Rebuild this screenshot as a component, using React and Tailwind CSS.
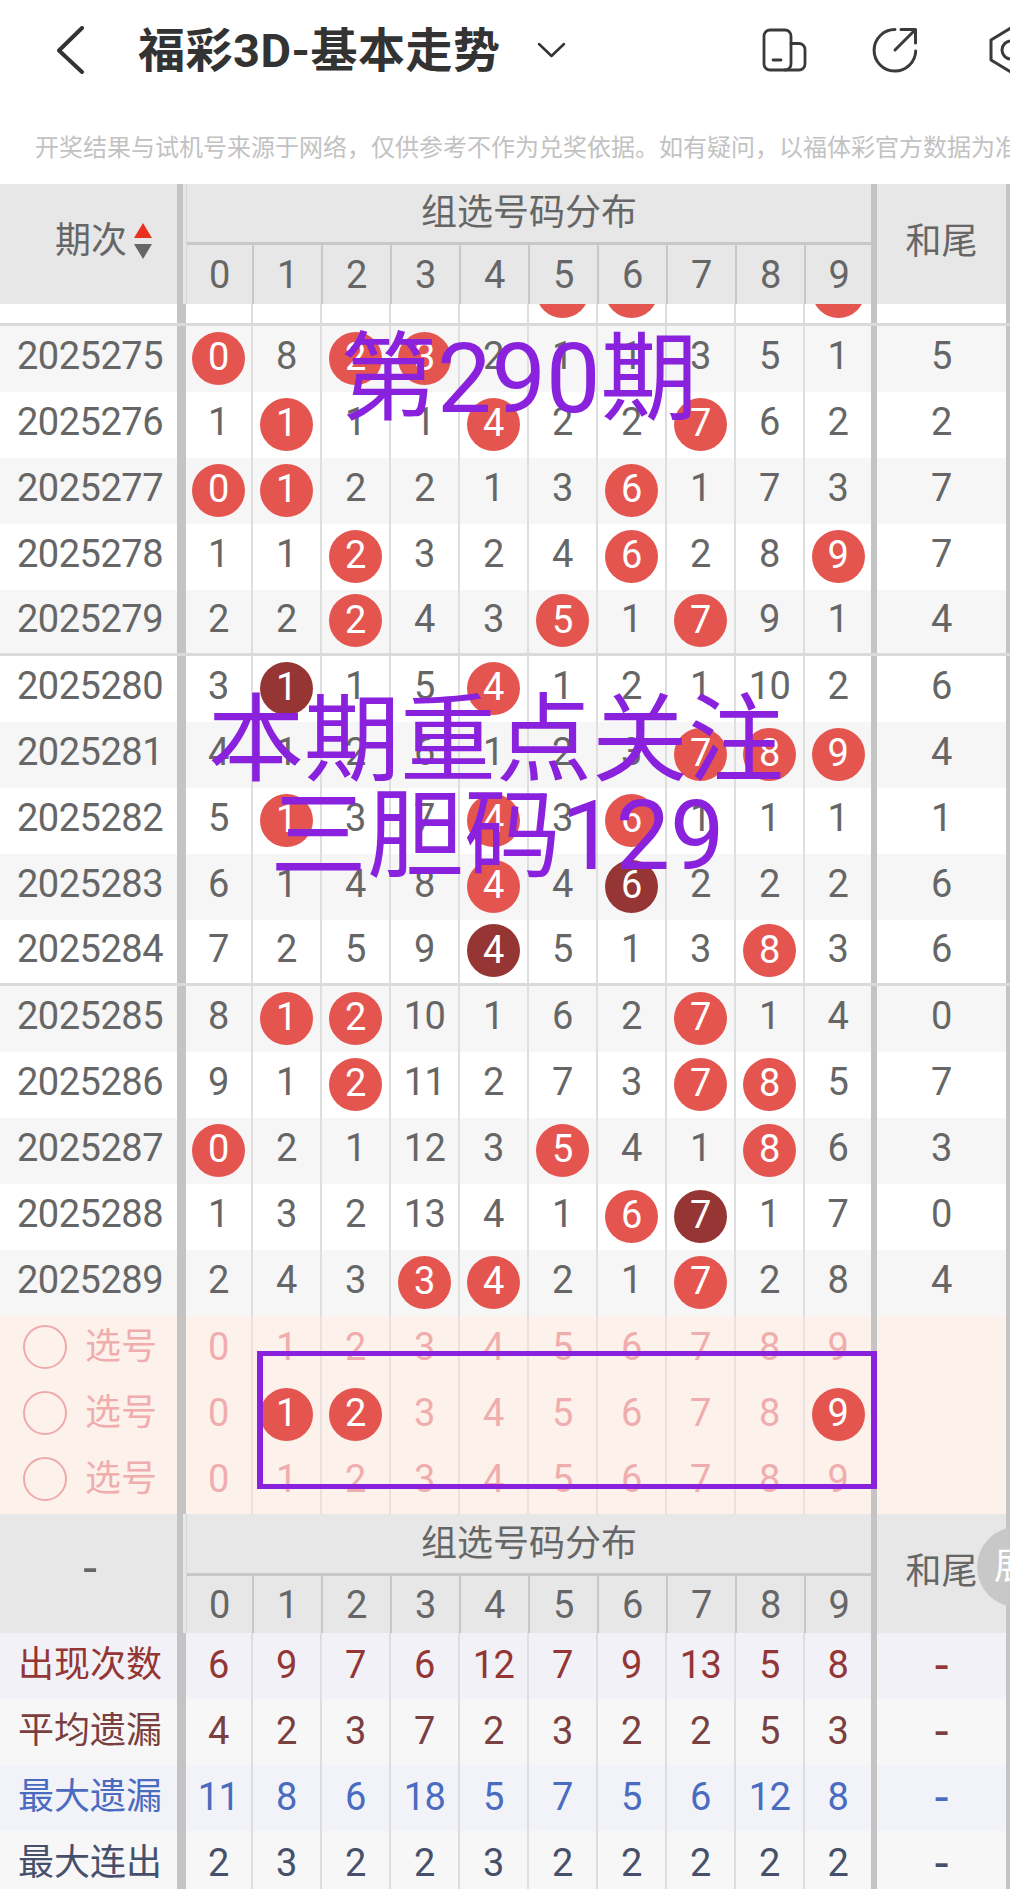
import React from 'react';

const rows = [
  ['2025275', ['0r', '8', '2r', '3r', '2', '1', '1', '3', '5', '1'], '5'],
  ['2025276', ['1', '1r', '1', '1', '4r', '2', '2', '7r', '6', '2'], '2'],
  ['2025277', ['0r', '1r', '2', '2', '1', '3', '6r', '1', '7', '3'], '7'],
  ['2025278', ['1', '1', '2r', '3', '2', '4', '6r', '2', '8', '9r'], '7'],
  ['2025279', ['2', '2', '2r', '4', '3', '5r', '1', '7r', '9', '1'], '4'],
  ['2025280', ['3', '1d', '1', '5', '4r', '1', '2', '1', '10', '2'], '6'],
  ['2025281', ['4', '1', '2', '6', '1', '2', '3', '7r', '8r', '9r'], '4'],
  ['2025282', ['5', '1r', '3', '7', '4r', '3', '6r', '1', '1', '1'], '1'],
  ['2025283', ['6', '1', '4', '8', '4r', '4', '6d', '2', '2', '2'], '6'],
  ['2025284', ['7', '2', '5', '9', '4d', '5', '1', '3', '8r', '3'], '6'],
  ['2025285', ['8', '1r', '2r', '10', '1', '6', '2', '7r', '1', '4'], '0'],
  ['2025286', ['9', '1', '2r', '11', '2', '7', '3', '7r', '8r', '5'], '7'],
  ['2025287', ['0r', '2', '1', '12', '3', '5r', '4', '1', '8r', '6'], '3'],
  ['2025288', ['1', '3', '2', '13', '4', '1', '6r', '7d', '1', '7'], '0'],
  ['2025289', ['2', '4', '3', '3r', '4r', '2', '1', '7r', '2', '8'], '4'],
];

const stats = [
  { label: '出现次数', values: [6, 9, 7, 6, 12, 7, 9, 13, 5, 8], bg: 'bg-[#f2f1f7]', color: 'text-[#933635]' },
  { label: '平均遗漏', values: [4, 2, 3, 7, 2, 3, 2, 2, 5, 3], bg: 'bg-[#f7f7f7]', color: 'text-[#7a4040]' },
  { label: '最大遗漏', values: [11, 8, 6, 18, 5, 7, 5, 6, 12, 8], bg: 'bg-[#f2f2f9]', color: 'text-[#4a6cc0]' },
  { label: '最大连出', values: [2, 3, 2, 2, 3, 2, 2, 2, 2, 2], bg: 'bg-[#f7f7f7]', color: 'text-[#46506b]' },
];

const digits = [0, 1, 2, 3, 4, 5, 6, 7, 8, 9];

const Ball = ({ children, dark }) => (
  <div className={`mb-[2px] flex h-[53px] w-[53px] shrink-0 items-center justify-center rounded-full pb-[2px] text-white ${dark ? 'bg-[#963634]' : 'bg-[#e5554f]'}`}>
    {children}
  </div>
);

// one column cell, widths line up with the header columns
const Cell = ({ index, line = 'border-[#dedede]', className = '', children }) => {
  const width = index === 0 ? 'w-[67px]' : index === 9 ? 'w-[66px]' : 'w-[69px]';
  const right = index === 9 ? '' : 'border-r-2';
  return (
    <div className={`flex shrink-0 items-center justify-center ${width} ${right} ${line} ${className}`}>
      {children}
    </div>
  );
};

const Divider = ({ className = 'w-[6px]' }) => <div className={`shrink-0 bg-[#c4c4c4] ${className}`} />;

const Row = ({ left, cells, tail, bg, color = 'text-[#666666]', line, underline, lift = 'pb-[6px]' }) => (
  <div className={`flex h-[66px] ${bg} ${color} ${underline ? 'border-b-[3px] border-[#dadada]' : ''}`}>
    <div className={`flex w-[177px] shrink-0 items-center justify-center pl-[3px] ${lift}`}>{left}</div>
    <Divider className="w-[9px]" />
    {cells.map((c, i) => (
      <Cell key={i} index={i} line={line}>
        {typeof c === 'object' ? c : <span className={lift}>{c}</span>}
      </Cell>
    ))}
    <Divider />
    <div className={`flex w-[129px] shrink-0 items-center justify-center ${lift}`}>{tail}</div>
    <Divider className="w-[4px]" />
  </div>
);

const TableHead = ({ left, heightClass, topClass }) => (
  <div className={`flex bg-[#e7e7e7] text-[#666666] ${heightClass}`}>
    <div className="flex w-[177px] shrink-0 items-center">{left}</div>
    <Divider />
    <div className="w-[3px] shrink-0" />
    <div className="flex w-[685px] shrink-0 flex-col border-l border-[#d6d6d6]">
      <div className={`flex items-center justify-center border-b-[3px] border-[#c8c8c8] text-[36px] tracking-normal ${topClass}`}>组选号码分布</div>
      <div className="flex flex-1">
        {digits.map((d) => (
          <Cell key={d} index={d} line="border-[#c8c8c8]" className={d === 0 ? 'w-[66px]' : ''}>{d}</Cell>
        ))}
      </div>
    </div>
    <Divider />
    <div className="flex w-[129px] shrink-0 items-center justify-center pb-[4px] text-[36px] tracking-normal">和尾</div>
    <Divider className="w-[4px]" />
  </div>
);

const TitleBar = () => (
  <div className="flex h-[100px] items-center overflow-hidden pl-[57px]">
    <svg width="27" height="48" viewBox="0 0 27 48" fill="none" stroke="#333333" strokeWidth="4" strokeLinecap="round" strokeLinejoin="round" className="shrink-0">
      <path d="M25 2 2 24.5 25 46" />
    </svg>
    <div className="ml-[54px] shrink-0 text-[47px] leading-none font-bold tracking-[0.5px] text-[#333333]">福彩3D-基本走势</div>
    <svg width="29" height="16" viewBox="0 0 29 16" fill="none" stroke="#333333" strokeWidth="2.5" strokeLinecap="round" strokeLinejoin="round" className="ml-[36px] shrink-0">
      <path d="M2 2 14.5 14 27 2" />
    </svg>
    <svg width="45" height="44" viewBox="0 0 45 44" fill="none" stroke="#3a3a3a" strokeWidth="2.8" strokeLinecap="round" strokeLinejoin="round" className="ml-[196px] shrink-0">
      <rect x="2" y="2" width="27" height="40" rx="6" />
      <path d="M29 15.5h8a6 6 0 0 1 6 6V36a6 6 0 0 1-6 6H23" />
      <path d="M11 32h8" />
    </svg>
    <svg width="46" height="46" viewBox="0 0 46 46" fill="none" stroke="#3a3a3a" strokeWidth="3" strokeLinecap="round" strokeLinejoin="round" className="ml-[65px] shrink-0">
      <path d="M23 2.5A20.8 20.8 0 1 0 43.7 24" />
      <path d="M23 23 43 3" />
      <path d="M29 2.5h14.5V16" />
    </svg>
    <svg width="40" height="48" viewBox="0 0 40 48" fill="none" stroke="#3a3a3a" strokeWidth="3" strokeLinecap="round" strokeLinejoin="round" className="ml-[71px] shrink-0">
      <path d="M22 2 2 14v20l20 12 20-12V14Z" />
      <circle cx="22" cy="24" r="9" />
    </svg>
  </div>
);

export default function App() {
  return (
    <div className="relative h-[1889px] w-[1010px] overflow-hidden bg-white font-['Roboto','Noto_Sans_CJK_SC',sans-serif] text-[38px] leading-none tracking-[-0.5px]">
      <TitleBar />
      <div className="h-[84px] overflow-hidden pt-[33px] pl-[35px] text-[24px] leading-[30px] tracking-normal whitespace-nowrap text-[#c2c2c2]">
        开奖结果与试机号来源于网络，仅供参考不作为兑奖依据。如有疑问，以福体彩官方数据为准
      </div>

      <TableHead
        heightClass="h-[120px]"
        topClass="h-[61px]"
        left={
          <div className="flex items-center gap-[7px] pb-[6px] pl-[55px]">
            <span className="text-[36px] tracking-normal">期次</span>
            <svg width="18" height="36" viewBox="0 0 18 36">
              <path d="M9 0 18 15H0Z" fill="#e8321f" />
              <path d="M0 21H18L9 36Z" fill="#666666" />
            </svg>
          </div>
        }
      />

      {/* row scrolled mostly under the sticky header */}
      <div className="flex h-[22px] overflow-hidden border-b-[3px] border-[#dadada] bg-white">
        <div className="w-[177px] shrink-0" />
        <Divider className="w-[9px]" />
        {digits.map((d) => (
          <Cell key={d} index={d} className="items-end">
            {(d === 5 || d === 6 || d === 9) && <div className="mb-[3px]"><Ball /></div>}
          </Cell>
        ))}
        <Divider />
        <div className="w-[129px] shrink-0" />
        <Divider className="w-[4px]" />
      </div>

      {rows.map(([issue, cells, tail], i) => (
        <Row
          key={issue}
          left={issue}
          tail={tail}
          bg={i % 2 === 0 ? 'bg-[#f6f6f6]' : 'bg-white'}
          underline={i === 4 || i === 9}
          cells={cells.map((c) => {
            if (c.endsWith('r')) return <Ball>{c.slice(0, -1)}</Ball>;
            if (c.endsWith('d')) return <Ball dark>{c.slice(0, -1)}</Ball>;
            return c;
          })}
        />
      ))}

      {[0, 1, 2].map((r) => (
        <Row
          key={r}
          bg="bg-[#fdf1eb]"
          color="text-[#f0adad]"
          line="border-[#e9e1dd]"
          lift="pb-[5px]"
          left={
            <div className="flex w-full items-center gap-[18px] pl-[20px]">
              <div className="h-[44px] w-[44px] rounded-full border-2 border-[#eeaaaa]" />
              <span className="text-[36px] tracking-normal">选号</span>
            </div>
          }
          cells={digits.map((d) => (r === 1 && (d === 1 || d === 2 || d === 9) ? <Ball>{d}</Ball> : d))}
        />
      ))}

      <TableHead
        heightClass="h-[119px]"
        topClass="h-[62px]"
        left={<div className="w-full pb-[12px] pl-[3px] text-center text-[50px]">-</div>}
      />

      {stats.map((s) => (
        <Row
          key={s.label}
          bg={s.bg}
          color={s.color}
          lift="pb-[3px]"
          left={<span className="text-[36px] tracking-normal">{s.label}</span>}
          cells={s.values}
          tail={<span className="text-[50px]">-</span>}
        />
      ))}

      {/* hand drawn markings on top of the screenshot */}
      <div className="absolute top-[331px] left-[340px] text-[97px] tracking-normal whitespace-nowrap text-[#8a22dd]">第290期</div>
      <div className="absolute top-[692px] left-[208px] text-[96px] tracking-normal whitespace-nowrap text-[#8a22dd]">本期重点关注</div>
      <div className="absolute top-[788px] left-[270px] text-[97px] tracking-normal whitespace-nowrap text-[#8a22dd]">三胆码129</div>
      <div className="absolute top-[1351px] left-[257px] h-[138px] w-[620px] border-x-[6px] border-y-[5px] border-[#8a22dd]" />

      {/* expand handle */}
      <div className="absolute top-[1527px] left-[977px] flex h-[80px] w-[80px] items-center rounded-full bg-[#c8c8c8] pl-[17px] text-[36px] tracking-normal text-white">展</div>
    </div>
  );
}
